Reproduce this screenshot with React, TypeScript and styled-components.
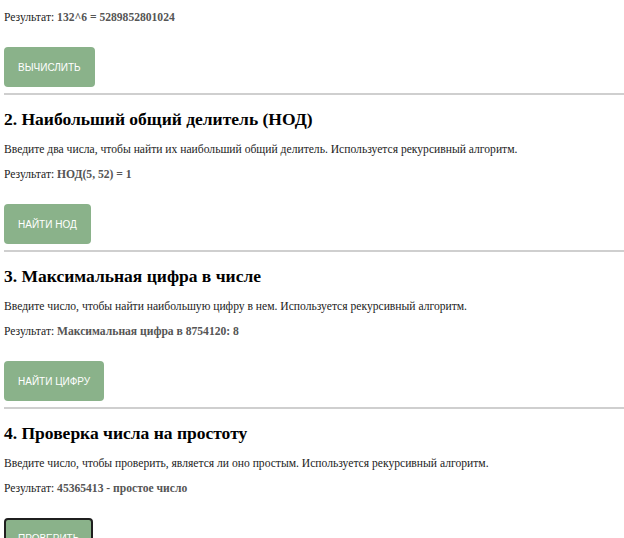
import styled, { createGlobalStyle } from "styled-components";

const GlobalStyle = createGlobalStyle`
  html, body {
    margin: 0;
    padding: 0;
    background-color: #ffffff;
  }
  body {
    font-family: "Liberation Serif", "Times New Roman", serif;
    color: #222222;
  }
`;

const Page = styled.div`
  display: flex;
  flex-direction: column;
  padding: 11px 0 0 4px;
`;

const Section = styled.section<{ $last?: boolean }>`
  display: flex;
  flex-direction: column;
  align-items: flex-start;
  padding-bottom: 6px;
  border-bottom: ${(p) => (p.$last ? "none" : "2px solid #cfcfcf")};
`;

const Title = styled.h2`
  margin: 14px 0 0;
  font-size: 17.5px;
  line-height: 21px;
  font-weight: bold;
  color: #000000;
`;

const Description = styled.p`
  margin: 13px 0 0;
  font-size: 11.6px;
  line-height: 14px;
  color: #222222;
`;

const Result = styled.p<{ $first?: boolean }>`
  margin: ${(p) => (p.$first ? "0" : "11px 0 0")};
  font-size: 11.6px;
  line-height: 14px;
  color: #222222;
`;

const Value = styled.strong`
  font-weight: bold;
  color: #555555;
`;

const Button = styled.button<{ $focused?: boolean }>`
  margin-top: 22px;
  height: 40px;
  padding: 0 ${(p) => (p.$focused ? "12px" : "14px")};
  border: ${(p) => (p.$focused ? "2px solid #1f1f1f" : "none")};
  border-radius: 4px;
  background-color: #8ab28a;
  color: #ffffff;
  font-family: "Liberation Sans", Arial, sans-serif;
  font-size: 10px;
  text-transform: uppercase;
  cursor: pointer;
`;

type Item = {
  title?: string;
  text?: string;
  result: string;
  button: string;
};

const items: Item[] = [
  { result: "132^6 = 5289852801024", button: "Вычислить" },
  {
    title: "2. Наибольший общий делитель (НОД)",
    text: "Введите два числа, чтобы найти их наибольший общий делитель. Используется рекурсивный алгоритм.",
    result: "НОД(5, 52) = 1",
    button: "Найти НОД",
  },
  {
    title: "3. Максимальная цифра в числе",
    text: "Введите число, чтобы найти наибольшую цифру в нем. Используется рекурсивный алгоритм.",
    result: "Максимальная цифра в 8754120: 8",
    button: "Найти цифру",
  },
  {
    title: "4. Проверка числа на простоту",
    text: "Введите число, чтобы проверить, является ли оно простым. Используется рекурсивный алгоритм.",
    result: "45365413 - простое число",
    button: "Проверить",
  },
];

const App: React.FC = () => {
  return (
    <>
      <GlobalStyle />
      <Page>
        {items.map((it, i) => (
          <Section key={i} $last={i === items.length - 1}>
            {it.title && <Title>{it.title}</Title>}
            {it.text && <Description>{it.text}</Description>}
            <Result $first={!it.title}>
              Результат: <Value>{it.result}</Value>
            </Result>
            <Button $focused={i === items.length - 1}>{it.button}</Button>
          </Section>
        ))}
      </Page>
    </>
  );
};

export default App;
